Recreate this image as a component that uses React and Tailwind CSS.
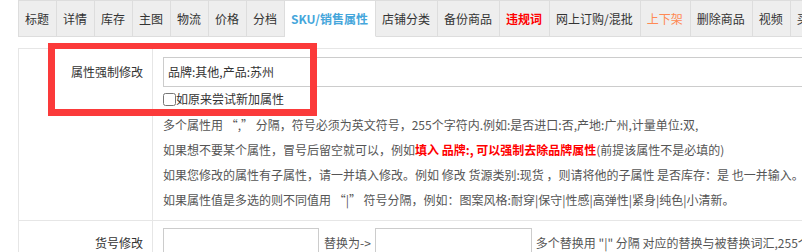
import React from "react";

const tabs = [
  { label: "标题" },
  { label: "详情" },
  { label: "库存" },
  { label: "主图" },
  { label: "物流" },
  { label: "价格" },
  { label: "分档" },
  { label: "SKU/销售属性", active: true },
  { label: "店铺分类" },
  { label: "备份商品" },
  { label: "违规词", className: "text-[#ff0000] font-bold" },
  { label: "网上订购/混批" },
  { label: "上下架", className: "text-[#ff8a55]" },
  { label: "删除商品" },
  { label: "视频" },
  { label: "买家秀" },
];

const App = () => {
  return (
    <div className="relative w-[802px] h-[252px] overflow-hidden bg-white text-[12px] text-[#333] font-['Noto_Sans_CJK_SC','Noto_Sans',sans-serif]">
      {/* Tabs */}
      <div className="flex pl-[18px]">
        {tabs.map((tab, index) => (
          <div
            key={index}
            className={
              "shrink-0 h-[37px] leading-[35px] pl-[6px] pr-[7px] border-y border-r border-[#dddddd] whitespace-nowrap " +
              (index === 0 ? "border-l " : "") +
              (tab.active
                ? "bg-white border-b-white text-[#45a6db] font-bold"
                : "bg-[#eeeeee] " + (tab.className || ""))
            }
          >
            {tab.label}
          </div>
        ))}
      </div>

      {/* Form table */}
      <div className="ml-[18px] mt-[11px] w-[900px] border border-[#e6e6e6]">
        <div className="flex border-b border-[#e6e6e6]">
          <div className="w-[134px] shrink-0 border-r border-[#e6e6e6] pt-[8px] pr-[9px] text-right leading-[30px]">
            属性强制修改
          </div>
          <div className="flex-1 pt-[8px] pl-[10px] pb-[8px]">
            <div className="h-[30px] w-[700px] border border-[#cccccc] pl-[4px] leading-[28px]">
              品牌:其他,产品:苏州
            </div>
            <label className="flex items-center h-[24px]">
              <input type="checkbox" className="m-0 w-[13px] h-[13px]" />
              <span>如原来尝试新加属性</span>
            </label>
            <div className="mt-[1px] text-[#555] whitespace-nowrap leading-[25px]">
              <p>多个属性用 “,” 分隔，符号必须为英文符号，255个字符内.例如:是否进口:否,产地:广州,计量单位:双,</p>
              <p>
                如果想不要某个属性，冒号后留空就可以，例如
                <span className="text-[#ff0000] font-bold">填入 品牌:, 可以强制去除品牌属性</span>
                (前提该属性不是必填的)
              </p>
              <p>如果您修改的属性有子属性，请一并填入修改。例如 修改 货源类别:现货 ，则请将他的子属性 是否库存：是 也一并输入。</p>
              <p>如果属性值是多选的则不同值用 “|” 符号分隔，例如：图案风格:耐穿|保守|性感|高弹性|紧身|纯色|小清新。</p>
            </div>
          </div>
        </div>
        <div className="flex">
          <div className="w-[134px] shrink-0 border-r border-[#e6e6e6] pt-[7px] pr-[9px] text-right leading-[30px]">
            货号修改
          </div>
          <div className="flex-1 flex items-center pt-[7px] pl-[10px] pb-[8px] whitespace-nowrap">
            <div className="h-[30px] w-[156px] border border-[#cccccc]"></div>
            <span className="ml-[5px] mr-[4px] text-[#555]">替换为-&gt;</span>
            <div className="h-[30px] w-[157px] border border-[#cccccc]"></div>
            <span className="ml-[4px] text-[#555]">多个替换用 "|" 分隔 对应的替换与被替换词汇,255个字符内</span>
          </div>
        </div>
      </div>

      {/* Annotation */}
      <div className="absolute left-[48px] top-[43px] w-[269px] h-[73px] border-[7px] border-t-[6px] border-[#fb3a3a]"></div>
    </div>
  );
};

export default App;
